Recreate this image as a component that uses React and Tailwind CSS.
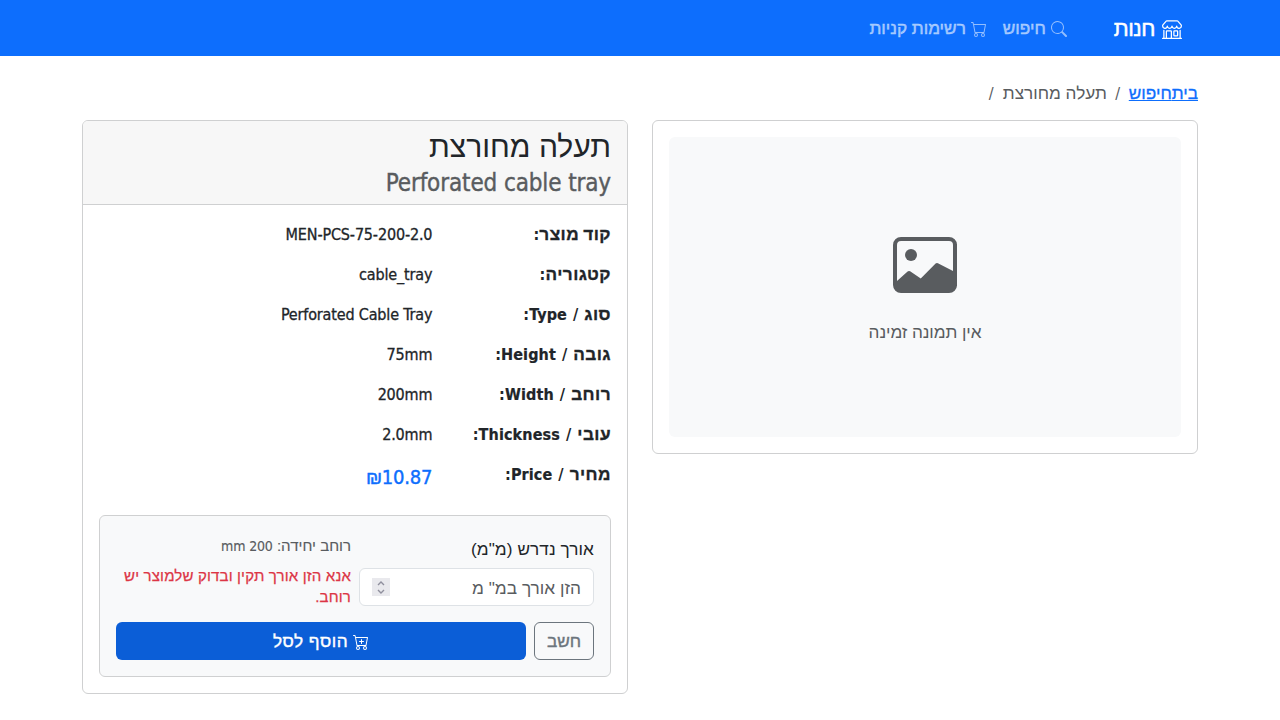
import React from 'react';
import { BsShop, BsSearch, BsCart, BsCartPlus, BsImage } from 'react-icons/bs';

const He = ({ children, className = '' }) => (
  <span className={`font-['Liberation_Sans',sans-serif] text-[1.075em] leading-none ${className}`}>{children}</span>
);

const rows = [
  { he: 'קוד מוצר', value: 'MEN-PCS-75-200-2.0' },
  { he: 'קטגוריה', value: 'cable_tray' },
  { he: 'סוג', en: 'Type', value: 'Perforated Cable Tray' },
  { he: 'גובה', en: 'Height', value: '75mm' },
  { he: 'רוחב', en: 'Width', value: '200mm' },
  { he: 'עובי', en: 'Thickness', value: '2.0mm' },
];

function RowLabel({ he, en }) {
  return (
    <dt className="w-[178.67px] shrink-0 whitespace-nowrap font-bold tracking-[0.008em] [word-spacing:0.8px]">
      <He className="tracking-[0.025em] [-webkit-text-stroke:0.3px] [word-spacing:-1px]">{he}</He>
      {en ? <> / <span className="[-webkit-text-stroke:0.2px]">{en}</span>:</> : ':'}
    </dt>
  );
}

function Navbar() {
  return (
    <nav className="h-14 bg-[#0d6efd] text-white">
      <div className="mx-auto flex h-full w-[1140px] items-center px-7 pt-[2px]">
        <a className="ml-[47px] flex items-center gap-[7px] text-xl">
          <BsShop className="size-5" />
          <He className="pt-px tracking-[-0.02em] [-webkit-text-stroke:0.5px]">חנות</He>
        </a>
        <div className="flex items-center gap-4 text-white/55">
          <a className="flex items-center gap-[5px]">
            <BsSearch className="size-4" />
            <He className="[-webkit-text-stroke:0.4px]">חיפוש</He>
          </a>
          <a className="flex items-center gap-[5px]">
            <BsCart className="size-4" />
            <He className="[-webkit-text-stroke:0.4px]">רשימות קניות</He>
          </a>
        </div>
      </div>
    </nav>
  );
}

function NumberInput() {
  return (
    <div className="flex h-[38px] items-center rounded-md border border-[#dee2e6] bg-white px-3">
      <input
        className="min-w-0 flex-1 pt-0.5 font-['Liberation_Sans',sans-serif] text-[17.3px] outline-none placeholder:text-[#595c5f]"
        placeholder={'הזן אורך במ" מ'}
      />
      <span className="flex h-[18px] w-[18px] flex-col items-center justify-center gap-[3px] bg-[#e9e9ed]">
        <svg width="8" height="5" viewBox="0 0 8 5" fill="none" stroke="#8f8f9d" strokeWidth="1.4">
          <path d="M1 4 4 1l3 3" />
        </svg>
        <svg width="8" height="5" viewBox="0 0 8 5" fill="none" stroke="#8f8f9d" strokeWidth="1.4">
          <path d="M1 1l3 3 3-3" />
        </svg>
      </span>
    </div>
  );
}

function Calculator() {
  return (
    <section className="mt-6 rounded-md border border-[#cfd0d1] bg-[#f8f9fa] p-4">
      <div className="grid h-[74px] grid-cols-2 gap-2">
        <div>
          <label className="mt-[6px] mb-[6px] block h-6 leading-6">
            <He className="tracking-[0.005em]">אורך נדרש (מ"מ)</He>
          </label>
          <NumberInput />
        </div>
        <div className="pt-1 text-sm leading-[21px]">
          <p className="mb-[9px] text-[#595c5f] [-webkit-text-stroke:0.15px]">
            <He>רוחב יחידה: </He>
            <span className="tracking-[-0.01em]">200 mm</span>
          </p>
          <p className="text-[#dc3545]">
            <He className="tracking-[0.01em] [-webkit-text-stroke:0.25px]">אנא הזן אורך תקין ובדוק שלמוצר יש רוחב.</He>
          </p>
        </div>
      </div>
      <div className="mt-4 flex gap-2">
        <button className="h-[38px] w-[60px] rounded-md border border-[#6c757d] pt-[2px] text-[#6c757d]">
          <He className="[-webkit-text-stroke:0.4px]">חשב</He>
        </button>
        <button className="flex h-[38px] flex-1 items-center justify-center gap-[5px] rounded-md bg-[#0b5ed7] pt-0.5 text-white">
          <BsCartPlus className="size-4" />
          <He className="tracking-[0.03em] [-webkit-text-stroke:0.4px]">הוסף לסל</He>
        </button>
      </div>
    </section>
  );
}

export default function App() {
  return (
    <div dir="rtl" className="h-[720px] overflow-hidden bg-white font-['DejaVu_Sans_Condensed',sans-serif] text-base leading-6 text-[#212529]">
      <Navbar />
      <main className="mx-auto w-[1116px] pt-[26px]">
        <ol className="mb-[14px] flex h-6 items-center gap-2 text-[#595c5f]">
          <li className="flex text-[#0d6efd] underline [-webkit-text-stroke:0.3px]">
            <He>בית</He>
            <He>חיפוש</He>
          </li>
          <li className="w-[6px] text-center">/</li>
          <li><He>תעלה מחורצת</He></li>
          <li className="w-[7px] text-center">/</li>
        </ol>
        <div className="grid grid-cols-2 items-start gap-6">
          <section className="rounded-md border border-[#cfd0d1] p-4">
            <div className="flex h-[300px] flex-col items-center justify-center rounded-md bg-[#f8f9fa] text-[#595c5f]">
              <BsImage className="mt-1 size-16" />
              <p className="mt-6"><He className="tracking-[-0.005em]">אין תמונה זמינה</He></p>
            </div>
          </section>
          <section className="overflow-hidden rounded-md border border-[#cfd0d1]">
            <header className="h-[84px] border-b border-[#cfd0d1] bg-[#f7f7f7] px-4 pt-[10px]">
              <h1 className="h-[38px] text-[28px] leading-[34px]"><He>תעלה מחורצת</He></h1>
              <h2 className="text-2xl leading-[29px] tracking-[-0.005em] text-[#595c5f] [-webkit-text-stroke:0.4px]">Perforated cable tray</h2>
            </header>
            <div className="p-4 pt-[18px]">
              <dl className="flex flex-col gap-4">
                {rows.map((r) => (
                  <div key={r.he} className="flex h-6">
                    <RowLabel he={r.he} en={r.en} />
                    <dd className="tracking-[-0.01em] [-webkit-text-stroke:0.3px]" dir="ltr">{r.value}</dd>
                  </div>
                ))}
                <div className="flex h-7">
                  <RowLabel he="מחיר" en="Price" />
                  <dd className="text-xl leading-[28px] tracking-[-0.01em] text-[#0d6efd] [-webkit-text-stroke:0.4px]" dir="ltr"><span className="font-['Liberation_Sans',sans-serif] text-[0.95em] leading-none">₪</span>10.87</dd>
                </div>
              </dl>
              <Calculator />
            </div>
          </section>
        </div>
      </main>
    </div>
  );
}
